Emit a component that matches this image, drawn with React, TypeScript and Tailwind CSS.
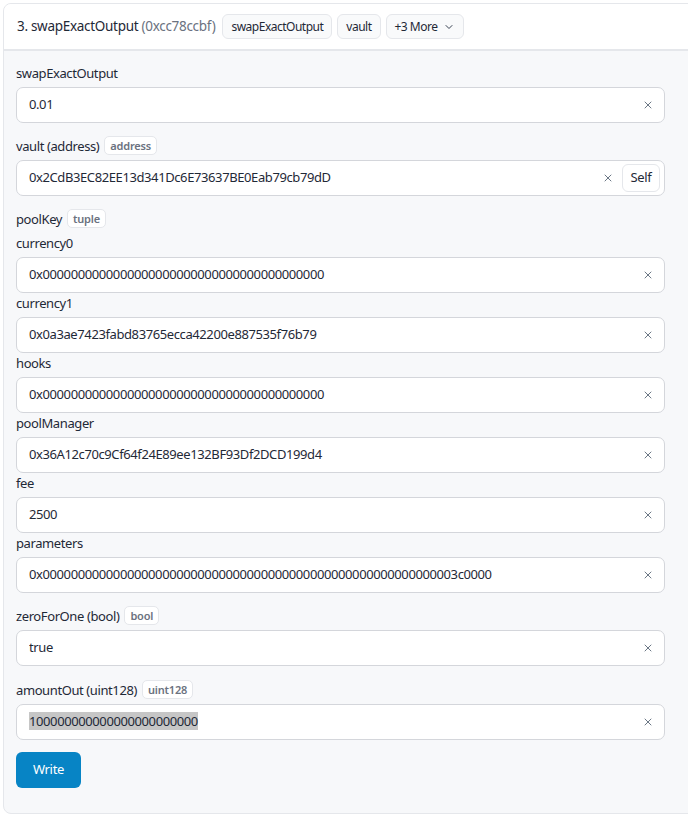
import React from "react";
import { X, ChevronDown } from "lucide-react";

const font = { fontFamily: '"Noto Sans", "Liberation Sans", sans-serif' };

function Badge({ children }: { children: React.ReactNode }) {
  return (
    <span className="ml-[5px] inline-flex h-[19px] items-center rounded-[5px] border border-[#e5e7eb] bg-white px-[5px] text-[11px] font-semibold tracking-[-0.2px] text-[#6b7280]">
      {children}
    </span>
  );
}

function Label({ text, badge }: { text: string; badge?: string }) {
  return (
    <div
      className={`mb-1 flex items-center text-[13px] leading-5 tracking-[-0.4px] text-[#1f2937] ${
        badge ? "h-[21px]" : "h-5"
      }`}
    >
      <span>{text}</span>
      {badge && <Badge>{badge}</Badge>}
    </div>
  );
}

function Field({
  value,
  self,
  selected,
}: {
  value: string;
  self?: boolean;
  selected?: boolean;
}) {
  return (
    <div className="flex h-9 items-center rounded-[7px] border border-[#d4d6db] bg-white pl-[12px] pr-[2px]">
      <div className="flex-1 truncate text-[13px] tracking-[-0.4px] text-[#1f2937]">
        {selected ? <span className="bg-[#c6c6c6]">{value}</span> : value}
      </div>
      <button className="flex h-7 w-7 items-center justify-center text-[#6b7785]">
        <X size={12} strokeWidth={2} />
      </button>
      {self && (
        <button className="mr-[2px] flex h-7 w-[38px] items-center justify-center rounded-[6px] border border-[#e5e7eb] bg-white text-[13px] tracking-[-0.3px] text-[#1f2937]">
          Self
        </button>
      )}
    </div>
  );
}

function Chip({ children }: { children: React.ReactNode }) {
  return (
    <span className="inline-flex h-[25px] items-center gap-1 rounded-[6px] border border-[#e5e7eb] bg-[#f9fafb] px-[8px] text-[12px] tracking-[-0.5px] text-[#1f2937]">
      {children}
    </span>
  );
}

export default function App() {
  return (
    <div className="min-h-[819px] bg-white pl-[3px] pt-[3px]" style={font}>
      <div className="w-[700px] overflow-hidden rounded-[8px] border border-[#e5e7eb] bg-[#f7f8fa]">
        <div className="flex h-[47px] items-center gap-[5px] border-b-[2px] border-[#e5e7eb] bg-white pl-[13px]">
          <div className="mr-[2px] text-[13.5px] tracking-[-0.3px] text-[#1f2937]">
            3. swapExactOutput <span className="text-[#6b7280]">(0xcc78ccbf)</span>
          </div>
          <Chip>swapExactOutput</Chip>
          <Chip>vault</Chip>
          <Chip>
            +3 More <ChevronDown size={12} className="ml-[2px] text-[#374151]" />
          </Chip>
        </div>
        <div className="flex flex-col gap-3 pb-[25px] pl-[12px] pr-[37px] pt-3">
          <div>
            <Label text="swapExactOutput" />
            <Field value="0.01" />
          </div>
          <div>
            <Label text="vault (address)" badge="address" />
            <Field value="0x2CdB3EC82EE13d341Dc6E73637BE0Eab79cb79dD" self />
          </div>
          <div>
            <Label text="poolKey" badge="tuple" />
            <div className="mt-[4px]">
              <Label text="currency0" />
              <Field value="0x0000000000000000000000000000000000000000" />
              <Label text="currency1" />
              <Field value="0x0a3ae7423fabd83765ecca42200e887535f76b79" />
              <Label text="hooks" />
              <Field value="0x0000000000000000000000000000000000000000" />
              <Label text="poolManager" />
              <Field value="0x36A12c70c9Cf64f24E89ee132BF93Df2DCD199d4" />
              <Label text="fee" />
              <Field value="2500" />
              <Label text="parameters" />
              <Field value="0x00000000000000000000000000000000000000000000000000000000003c0000" />
            </div>
          </div>
          <div>
            <Label text="zeroForOne (bool)" badge="bool" />
            <Field value="true" />
          </div>
          <div className="pt-[1px]">
            <Label text="amountOut (uint128)" badge="uint128" />
            <Field value="100000000000000000000000" selected />
          </div>
          <div>
            <button className="h-9 w-[65px] rounded-[6px] bg-[#0784c5] text-[13px] tracking-[-0.3px] text-white">
              Write
            </button>
          </div>
        </div>
      </div>
    </div>
  );
}
